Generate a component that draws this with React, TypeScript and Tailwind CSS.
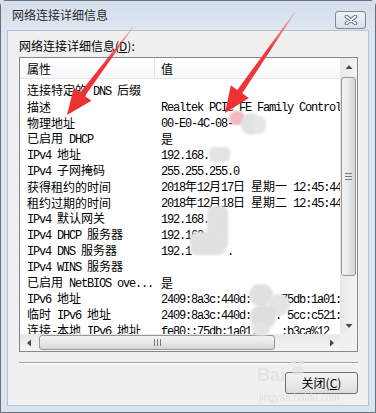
import React from "react";

const rows: [string, string][] = [
  ["连接特定的 DNS 后缀", ""],
  ["描述", "Realtek PCIe FE Family Controller"],
  ["物理地址", "00-E0-4C-08-"],
  ["已启用 DHCP", "是"],
  ["IPv4 地址", "192.168."],
  ["IPv4 子网掩码", "255.255.255.0"],
  ["获得租约的时间", "2018年12月17日 星期一 12:45:44"],
  ["租约过期的时间", "2018年12月18日 星期二 12:45:44"],
  ["IPv4 默认网关", "192.168."],
  ["IPv4 DHCP 服务器", "192.168."],
  ["IPv4 DNS 服务器", "192.1      ."],
  ["IPv4 WINS 服务器", ""],
  ["已启用 NetBIOS ove...", "是"],
  ["IPv6 地址", "2409:8a3c:440d:    :75db:1a01:"],
  ["临时 IPv6 地址", "2409:8a3c:440d:    : 5cc:c521:"],
  ["连接-本地 IPv6 地址", "fe80::75db:1a01:    :b3ca%12"],
];

function Mixed({ text }: { text: string }) {
  const parts = text.split(/([\x00-\x7F]+)/).filter((p) => p.length > 0);
  return (
    <>
      {parts.map((p, i) =>
        /^[\x00-\x7F]+$/.test(p) ? (
          <span
            key={i}
            className="font-['Liberation_Mono'] text-[12px] tracking-[-1.2px]"
          >
            {p}
          </span>
        ) : (
          <span key={i} className="text-[12px]">
            {p}
          </span>
        )
      )}
    </>
  );
}

function Tri({ dir }: { dir: "up" | "down" | "left" | "right" }) {
  const pts = {
    up: "0.5,5 7.5,5 4,1",
    down: "0.5,1 7.5,1 4,5",
    left: "5,0.5 5,7.5 1,4",
    right: "1,0.5 1,7.5 5,4",
  }[dir];
  const vb = dir === "up" || dir === "down" ? "0 0 8 6" : "0 0 6 8";
  const w = dir === "up" || dir === "down" ? 8 : 6;
  const h = dir === "up" || dir === "down" ? 6 : 8;
  return (
    <svg width={w} height={h} viewBox={vb}>
      <polygon points={pts} fill="#4a4a4a" />
    </svg>
  );
}

function VScroll() {
  return (
    <div className="w-[17px] h-full flex flex-col bg-linear-to-r from-[#e8e8e8] to-[#f4f4f4]">
      <div className="h-[17px] flex items-center justify-center">
        <Tri dir="up" />
      </div>
      <div className="mt-[2px] mx-[1px] h-[199px] rounded-[3px] border border-[#979797] bg-linear-to-r from-[#f4f4f4] via-[#e8e8e8] to-[#d4d4d4] flex flex-col items-center justify-center gap-[2px]">
        <div className="w-[7px] h-[1px] bg-[#7a7a7a]" />
        <div className="w-[7px] h-[1px] bg-[#7a7a7a]" />
        <div className="w-[7px] h-[1px] bg-[#7a7a7a]" />
      </div>
      <div className="flex-1" />
      <div className="h-[17px] flex items-center justify-center">
        <Tri dir="down" />
      </div>
    </div>
  );
}

function HScroll() {
  return (
    <div className="w-[320px] h-[17px] flex bg-linear-to-b from-[#e8e8e8] to-[#f4f4f4]">
      <div className="w-[17px] flex items-center justify-center">
        <Tri dir="left" />
      </div>
      <div className="ml-[2px] my-[1px] w-[236px] rounded-[3px] border border-[#979797] bg-linear-to-b from-[#f4f4f4] via-[#e8e8e8] to-[#d4d4d4] flex items-center justify-center gap-[2px]">
        <div className="w-[1px] h-[7px] bg-[#7a7a7a]" />
        <div className="w-[1px] h-[7px] bg-[#7a7a7a]" />
        <div className="w-[1px] h-[7px] bg-[#7a7a7a]" />
      </div>
      <div className="flex-1" />
      <div className="w-[17px] flex items-center justify-center">
        <Tri dir="right" />
      </div>
    </div>
  );
}

function ListView() {
  return (
    <div className="w-[339px] h-[295px] border border-[#828790] bg-white flex flex-col">
      <div className="flex h-[276px]">
        <div className="w-[320px] flex flex-col overflow-hidden">
          <div className="h-[21px] shrink-0 flex border-b border-[#e5e5e5] bg-linear-to-b from-white to-[#f7f8f9] text-[12px] text-black">
            <div className="w-[135px] pl-[7px] pt-[2px] border-r border-[#e5e5e5] flex items-center">
              属性
            </div>
            <div className="pl-[6px] pt-[2px] flex items-center">值</div>
          </div>
          <div className="pt-[3px] flex flex-col">
            {rows.map(([n, v], i) => (
              <div
                key={i}
                className="h-[16px] shrink-0 flex items-center whitespace-pre leading-[16px] text-black"
              >
                <div className="w-[135px] pl-[7px] overflow-hidden">
                  <Mixed text={n} />
                </div>
                <div className="w-[185px] pl-[6px] overflow-hidden">
                  <Mixed text={v} />
                </div>
              </div>
            ))}
          </div>
        </div>
        <VScroll />
      </div>
      <div className="flex h-[17px]">
        <HScroll />
        <div className="w-[17px] bg-[#f0f0f0]" />
      </div>
    </div>
  );
}

function Blob({ c }: { c: string }) {
  return <div className={c} />;
}

export default function App() {
  return (
    <div className="relative w-[376px] h-[413px] overflow-hidden font-['Noto_Sans_CJK_SC',sans-serif] bg-[#dbe6f3]">
      <div className="w-full h-full flex flex-col border border-[#6a6f76] rounded-t-[6px] bg-[#d9e4f1]">
        <div className="h-[29px] shrink-0 flex items-center justify-between pl-[11px] pr-[9px] bg-linear-to-b from-[#d5dfeb] to-[#dde6f1]">
          <span className="text-[12px] text-[#2a2a2a] pb-[1px]">网络连接详细信息</span>
          <div className="w-[31px] h-[18px] mt-[8px] rounded-[3px] border border-[#7d8898] bg-linear-to-b from-[#eef2f7] to-[#d9e1eb] flex items-center justify-center">
            <svg width="14" height="10" viewBox="0 0 14 10">
              <path d="M2.5 1.5 L11.5 8.5 M11.5 1.5 L2.5 8.5" stroke="#5d6674" strokeWidth="3.6" strokeLinecap="round" />
              <path d="M2.5 1.5 L11.5 8.5 M11.5 1.5 L2.5 8.5" stroke="#ffffff" strokeWidth="1.8" strokeLinecap="round" />
            </svg>
          </div>
        </div>
        <div className="mx-[6px] mb-[6px] flex-1 border border-[#b6c3d2] bg-[#f0f0f0] pl-[11px] pr-[10px] pt-[8px] flex flex-col">
          <div className="h-[14px] mb-[4px] text-[12px] leading-[14px] text-black">
            网络连接详细信息(<span className="underline">D</span>):
          </div>
          <ListView />
          <div className="mt-[10px] w-[339px] h-[2px] border-t border-[#a0a0a0] border-b border-b-white" />
          <div className="mt-[8px] w-[339px] flex justify-end">
            <button className="w-[73px] h-[22px] rounded-[3px] border border-[#707070] bg-linear-to-b from-[#f2f2f2] via-[#ebebeb] to-[#dcdcdc] text-[12px] leading-[20px] text-black">
              关闭(<span className="underline">C</span>)
            </button>
          </div>
        </div>
      </div>

      {/* privacy blurs */}
      <Blob c="absolute left-[229px] top-[111px] w-[16px] h-[14px] rounded-full bg-[#f2b9bb] blur-[1px]" />
      <Blob c="absolute left-[241px] top-[113px] w-[20px] h-[22px] rounded-full bg-[#e2e2e2] blur-[1px]" />
      <Blob c="absolute left-[252px] top-[116px] w-[14px] h-[18px] rounded-full bg-[#e6e6e6] blur-[1px]" />
      <Blob c="absolute left-[209px] top-[147px] w-[21px] h-[15px] rounded-[5px] bg-[#e3e3e3] blur-[1px]" />
      <Blob c="absolute left-[207px] top-[206px] w-[21px] h-[44px] rounded-[6px] bg-[#e1e1e1] blur-[1px]" />
      <Blob c="absolute left-[190px] top-[232px] w-[35px] h-[23px] rounded-[6px] bg-[#e1e1e1] blur-[1px]" />
      <Blob c="absolute left-[249px] top-[284px] w-[24px] h-[22px] rounded-full bg-[#e0e0e0] blur-[1px]" />
      <Blob c="absolute left-[268px] top-[294px] w-[22px] h-[22px] rounded-full bg-[#e3e3e3] blur-[1px]" />
      <Blob c="absolute left-[250px] top-[305px] w-[26px] h-[24px] rounded-full bg-[#dedede] blur-[1px]" />
      <Blob c="absolute left-[252px] top-[322px] w-[18px] h-[14px] rounded-full bg-[#e4e4e4] blur-[1px]" />

      {/* watermark */}
      <div className="absolute left-[257px] top-[366px] text-[18px] font-bold leading-[18px] font-['Liberation_Sans'] text-[#e2e2e2] opacity-80">
        Bai
      </div>
      <div className="absolute left-[291px] top-[359px] flex flex-col items-center opacity-70">
        <div className="flex gap-[3px]">
          <div className="w-[5px] h-[6px] rounded-full bg-[#e6e6e6]" />
          <div className="w-[5px] h-[6px] rounded-full bg-[#e6e6e6]" />
        </div>
        <div className="w-[12px] h-[9px] mt-[1px] rounded-full bg-[#e6e6e6]" />
      </div>
      <div className="absolute left-[259px] top-[393px] text-[10px] leading-[10px] font-['Liberation_Sans'] text-[#dcdcdc] opacity-80">
        jingyan.baidu.com
      </div>

      {/* red annotation arrows */}
      <svg className="absolute left-0 top-0 pointer-events-none" width="376" height="413" viewBox="0 0 376 413">
        <defs>
          <linearGradient id="g1" x1="133" y1="27" x2="67" y2="115" gradientUnits="userSpaceOnUse">
            <stop offset="0" stopColor="#f03a3a" stopOpacity="0.2" />
            <stop offset="0.35" stopColor="#ee2f31" stopOpacity="0.95" />
            <stop offset="1" stopColor="#ee2f31" />
          </linearGradient>
          <linearGradient id="g2" x1="295" y1="12" x2="225" y2="113" gradientUnits="userSpaceOnUse">
            <stop offset="0" stopColor="#f03a3a" stopOpacity="0.2" />
            <stop offset="0.35" stopColor="#ee2f31" stopOpacity="0.95" />
            <stop offset="1" stopColor="#ee2f31" />
          </linearGradient>
        </defs>
        <polygon
          points="133.4,27.3 85,96 91.4,100.8 67,115 73.8,87.6 80.2,92.4 132.6,26.7"
          fill="url(#g1)"
        />
        <polygon
          points="295.4,12.3 242.3,93.3 248.8,97.9 225,113 230.8,85.3 237.3,89.9 294.6,11.7"
          fill="url(#g2)"
        />
      </svg>
    </div>
  );
}
